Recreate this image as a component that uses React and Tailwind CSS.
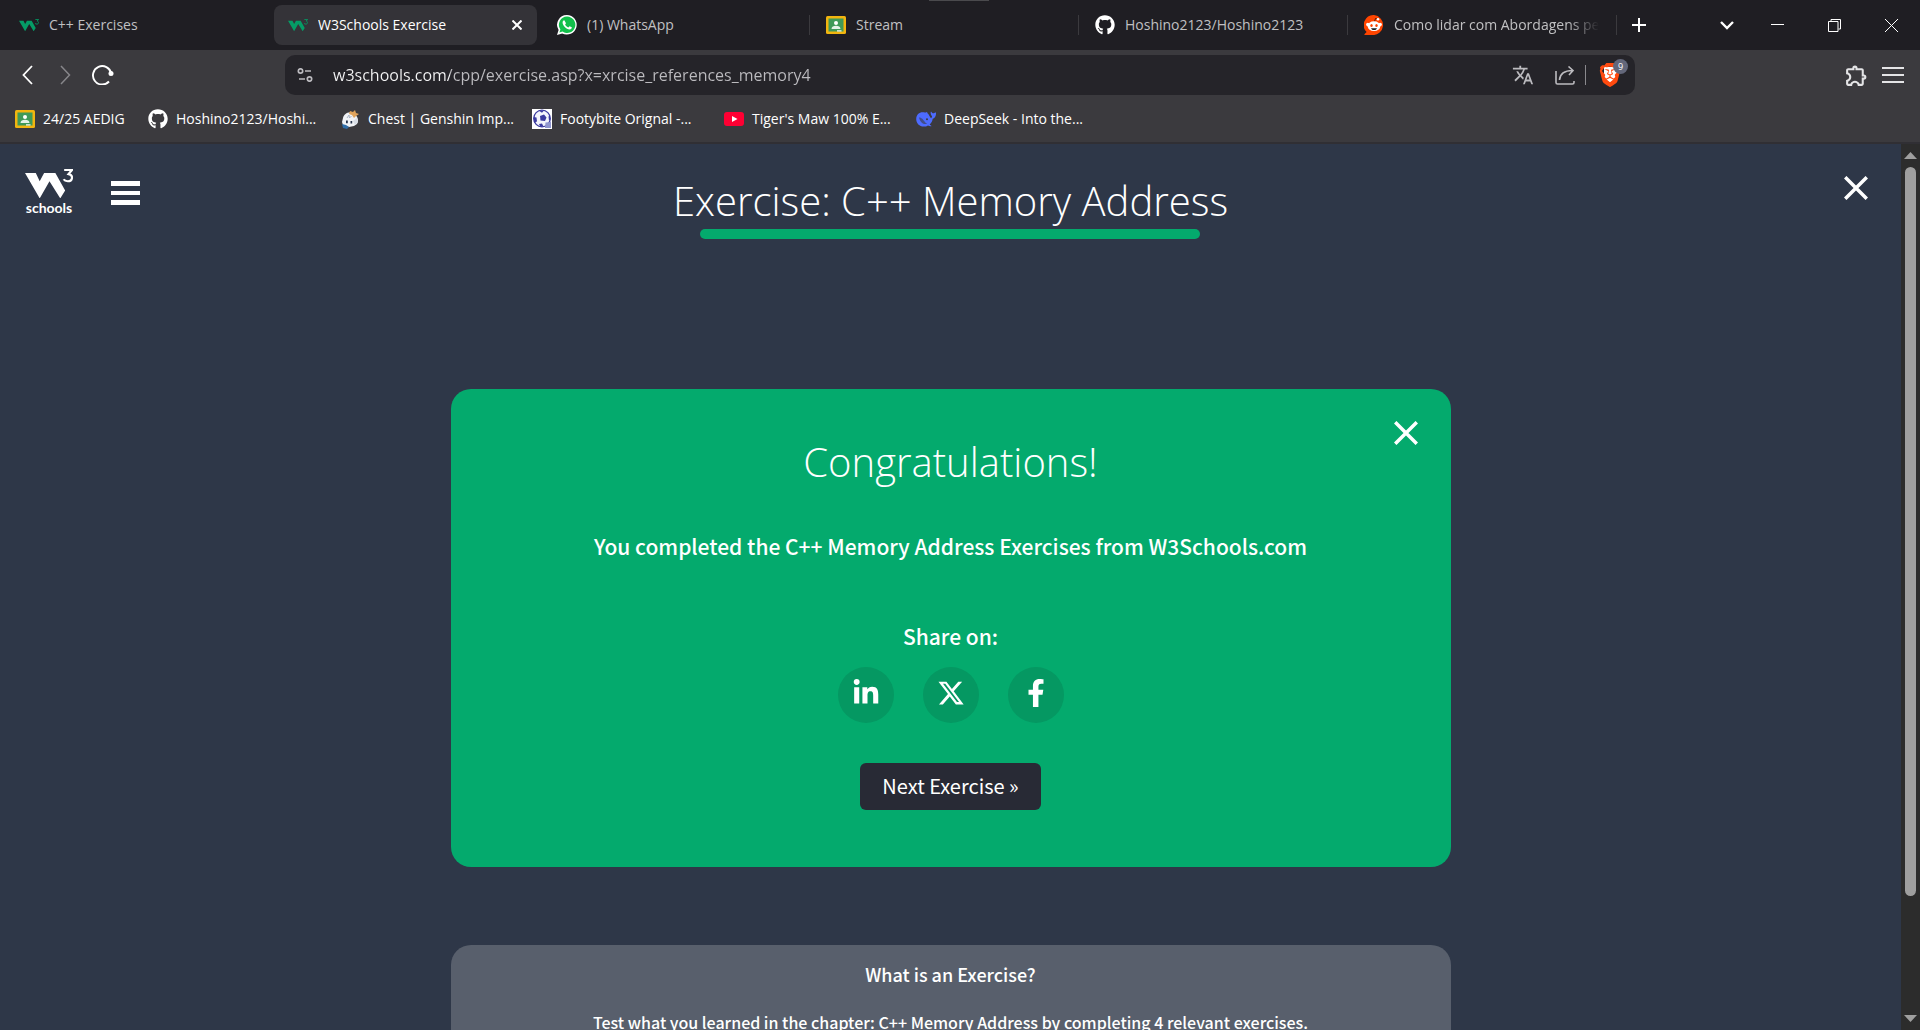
import { FaGithub, FaWhatsapp, FaLinkedinIn, FaFacebookF } from "react-icons/fa";
import { FaXTwitter } from "react-icons/fa6";
import { SiBrave } from "react-icons/si";
import { MdTranslate, MdOutlineExtension } from "react-icons/md";

const UI_FONT = "font-['Open_Sans','Noto_Sans',sans-serif]";
const BODY_FONT = "font-['Noto_Sans_CJK_SC',sans-serif]";

function W3Mark({ className }) {
  return (
    <svg viewBox="0 0 49 30" className={className} fill="currentColor" aria-hidden="true">
      <path d="M0 4h11l4 8.500 4.500-8.500h11.500l10 18-5 8-11-17.500L15 30z" />
      <path d="M40 1h8l-3.500 4.200c5 .8 4.500 7.300-.8 7.300-2 0-3.500-.7-4.300-2" fill="none" stroke="currentColor" strokeWidth="2.200" />
    </svg>
  );
}

function W3Favicon() {
  return <W3Mark className="w-5 text-[#059c66]" />;
}

function WhatsAppIcon() {
  return (
    <svg viewBox="0 0 20 20" className="size-5" aria-hidden="true">
      <path d="M10 0a9.800 9.800 0 1 1-4.800 18.400L0 20l1.600-5A9.800 9.800 0 0 1 10 0z" fill="#fff" />
      <path d="M10 1.600a8.200 8.200 0 1 1-4.400 15L2.400 17.600l1-3.100A8.200 8.200 0 0 1 10 1.600z" fill="#12c04b" />
      <path
        d="M7.300 5.300c-.5-.1-1.700.6-1.700 2.200 0 3 3.700 6.900 6.900 6.900 1.600 0 2.400-1 2.300-2.100l-2.300-1.100-1.100 1.300c-1.500-.6-2.700-1.700-3.300-3.100l.9-1.100z"
        fill="#fff"
      />
    </svg>
  );
}

function ClassroomIcon() {
  return (
    <svg viewBox="0 0 20 18" className="w-5" aria-hidden="true">
      <rect width="20" height="18" rx="1.5" fill="#f2b50f" />
      <rect x="2.500" y="2.500" width="15" height="13" fill="#3f9a58" />
      <circle cx="10" cy="7" r="2" fill="#fff" />
      <path d="M5.500 13c0-2.300 2-3.300 4.500-3.300s4.500 1 4.500 3.300z" fill="#e4f2e7" />
      <path d="M11 15.500h4.500v-1.200H11z" fill="#fff" />
    </svg>
  );
}

function GitHubIcon() {
  return <FaGithub className="size-5 text-white" />;
}

function RedditIcon() {
  return (
    <svg viewBox="0 0 20 20" className="size-5" aria-hidden="true">
      <path d="M10 0a10 10 0 1 1-2 20H1c-.6 0-.8-.6-.4-1l2-2A10 10 0 0 1 10 0z" fill="#ff4500" />
      <path d="M10.500 6.500l1-3 2.500.7" fill="none" stroke="#3a1408" strokeWidth=".9" />
      <circle cx="14" cy="4.300" r="1.300" fill="#fff" />
      <circle cx="3.800" cy="9.500" r="1.700" fill="#fff" />
      <circle cx="16.200" cy="9.500" r="1.700" fill="#fff" />
      <ellipse cx="10" cy="11.200" rx="6.300" ry="4.900" fill="#fff" />
      <ellipse cx="7.500" cy="10.500" rx="1.200" ry="1.500" fill="#ff4500" />
      <ellipse cx="12.500" cy="10.500" rx="1.200" ry="1.500" fill="#ff4500" />
      <path d="M7 13.200h6c-.5 1.300-1.600 1.900-3 1.900s-2.500-.6-3-1.900z" fill="#1c2023" />
    </svg>
  );
}

function PaimonIcon() {
  return (
    <svg viewBox="0 0 20 20" className="size-5" aria-hidden="true">
      <path d="M3 9c1-5 7-7 11-4 4 2 5 7 3 10l-3 2-5 1-6-2-1-3z" fill="#f1f3f6" />
      <path d="M2 15l4 1 3 2-2 2-4-1z" fill="#2f6da8" />
      <path d="M10 2l3 1 2-2 1 3 3 1-3 2-2 2-2-3-3-1z" fill="#e0a45c" />
      <path d="M7 9l2-3 .5 3 2-2" fill="none" stroke="#9aa6b8" strokeWidth=".8" />
      <path d="M6 11.500h1.800v2.800H6zM10.500 12h1.700v2.500h-1.700z" fill="#26334c" />
      <path d="M13 12l4-3 1 4-3 3z" fill="#d9dee6" />
    </svg>
  );
}

function FootballIcon() {
  return (
    <svg viewBox="0 0 20 20" className="size-5" aria-hidden="true">
      <rect width="20" height="20" fill="#fff" />
      <circle cx="10" cy="9.500" r="8.300" fill="#f3f4fc" stroke="#3b3aa0" strokeWidth="1.300" />
      <path d="M8 7l4-1.500 2.500 3-1.500 3.500-4.500-.5z" fill="#3b3aa0" />
      <path d="M7 1.800l5-.3-2 2.300zM1.800 8l2.700.5.5 4-2.700 1zM18 6.500l-1.500 1 .5 4 1.200-.5zM7 15l3-.5 1.500 3-3 .5z" fill="#3b3aa0" />
      <path d="M13.500 13.500l5.500-.5v6h-6z" fill="#8f95cf" />
    </svg>
  );
}

function YouTubeIcon() {
  return (
    <svg viewBox="0 0 20 14" className="w-5" aria-hidden="true">
      <rect width="20" height="14" rx="3" fill="#ff0033" />
      <path d="M8 4l5.500 3L8 10z" fill="#fff" />
    </svg>
  );
}

function DeepSeekIcon() {
  return (
    <svg viewBox="0 0 20 16" className="w-5" aria-hidden="true">
      <path
        d="M19.800 1.600c-.7-.2-1.200.6-2 .7-1 .1-1.800-.2-2.300-1.200-.3-.6-.7-.6-.8 0-.2 1.600.3 3.200 1.400 4.200-.2.9-.5 1.500-1 1.900-1-.9-1.600-2.300-2.300-3.500-.6-1-1.600-1.300-1.500-2 0-.5-.2-.7-.8-.5-.9.300-2.300.2-3.700.1C3.300 1.200.2 3.900.2 8c0 4.400 3.300 7.600 7.500 7.600 1.700 0 3.100-.4 4.300-1.200.9.500 2 .9 3 .8.600-.1.500-.5 0-.7-.7-.3-1.200-.6-1.300-1 1.600-1.300 2.700-3.300 3-5.700 2-.3 3.200-2.500 3.400-5.400.1-.5 0-.7-.3-.8z"
        fill="#4d6bfe"
      />
      <path d="M3 6.500c3 0 4.500 2.700 6.300 4.900.6.700 1.200 1.100 1.900 1.300-3 1.200-6.800-.4-8.200-6.200z" fill="#3b3a3e" opacity=".6" />
      <circle cx="11" cy="8.300" r="1" fill="#3b3a3e" />
    </svg>
  );
}

const TABS = [
  { title: "C++ Exercises", Icon: W3Favicon },
  { title: "W3Schools Exercise", Icon: W3Favicon, active: true },
  { title: "(1) WhatsApp", Icon: WhatsAppIcon, divider: true },
  { title: "Stream", Icon: ClassroomIcon, divider: true },
  { title: "Hoshino2123/Hoshino2123", Icon: GitHubIcon, divider: true },
  { title: "Como lidar com Abordagens pe", Icon: RedditIcon, divider: true, fade: true },
];

const BOOKMARKS = [
  { title: "24/25 AEDIG", Icon: ClassroomIcon, width: "w-[133px]" },
  { title: "Hoshino2123/Hoshi...", Icon: GitHubIcon, width: "w-[192px]" },
  { title: "Chest | Genshin Imp...", Icon: PaimonIcon, width: "w-[192px]" },
  { title: "Footybite Orignal -...", Icon: FootballIcon, width: "w-[192px]" },
  { title: "Tiger's Maw 100% E...", Icon: YouTubeIcon, width: "w-[192px]" },
  { title: "DeepSeek - Into the...", Icon: DeepSeekIcon, width: "w-[192px]" },
];

function Tab({ title, Icon, active, divider, fade }) {
  return (
    <div className="flex w-[269px] items-center">
      <div
        className={`flex h-10 min-w-0 grow items-center rounded-lg pr-3 pl-3.5 ${
          active ? "bg-[#343338] text-white" : "text-[#c0c0c2]"
        }`}
      >
        <button type="button" role="tab" aria-selected={!!active} className="flex min-w-0 grow items-center gap-2.5 text-left">
          <span className="shrink-0"><Icon /></span>
          <span
            className={`overflow-hidden text-sm whitespace-nowrap ${
              fade ? "mask-r-from-85% mask-r-to-100%" : ""
            }`}
          >
            {title}
          </span>
        </button>
        {active && (
          <button type="button" aria-label="Close tab" className="grid size-4 place-items-center">
            <svg viewBox="0 0 10 10" className="size-2.5" stroke="currentColor" strokeWidth="2"><path d="M.5.5l9 9M9.500.5l-9 9" /></svg>
          </button>
        )}
      </div>
      <span className={`ml-[3px] h-5 w-px ${divider ? "bg-[#3b3a3e]" : ""}`} />
      <span className="w-0.5" />
    </div>
  );
}

function TabStrip() {
  return (
    <div className="relative flex h-[50px] items-center bg-[#1f1e23] pl-[5px]">
      <span className="absolute top-0 left-[929px] h-px w-[60px] bg-[#4a4a4d]" />
      <div role="tablist" className="flex">
        {TABS.map((tab) => <Tab key={tab.title} {...tab} />)}
      </div>
      <button type="button" aria-label="New tab" className="ml-1 grid size-8 place-items-center text-white">
        <svg viewBox="0 0 14 14" className="size-3.5" stroke="currentColor" strokeWidth="2"><path d="M7 0v14M0 7h14" /></svg>
      </button>
      <div className="ml-auto flex items-center text-white">
        <button type="button" aria-label="Search tabs" className="grid h-10 w-11 place-items-center">
          <svg viewBox="0 0 14 9" className="w-3.5" fill="none" stroke="currentColor" strokeWidth="2.400"><path d="M1 1l6 6 6-6" /></svg>
        </button>
        <button type="button" aria-label="Minimize" className="grid h-10 w-[57px] place-items-center">
          <svg viewBox="0 0 13 13" className="size-[13px]" stroke="currentColor"><path d="M0 5.500h13" /></svg>
        </button>
        <button type="button" aria-label="Restore" className="grid h-10 w-[57px] place-items-center">
          <svg viewBox="0 0 13 13" className="size-[13px]" fill="none" stroke="currentColor"><path d="M.5 2.500h9.500v10H.5zM3 2.500V.5h9.500v9.500h-2" /></svg>
        </button>
        <button type="button" aria-label="Close window" className="grid h-10 w-[57px] place-items-center">
          <svg viewBox="0 0 13 13" className="size-[13px]" stroke="currentColor"><path d="M0 0l13 13M13 0L0 13" /></svg>
        </button>
      </div>
    </div>
  );
}

function Toolbar() {
  return (
    <div className="flex h-[50px] items-center pr-4 pl-[15px]">
      <div className="flex w-[270px] items-center gap-3.5">
        <button type="button" aria-label="Back" className="grid size-6 place-items-center text-white">
          <svg viewBox="0 0 11 20" className="h-5" fill="none" stroke="currentColor" strokeWidth="1.800"><path d="M10 1L1.500 10l8.500 9" /></svg>
        </button>
        <button type="button" aria-label="Forward" className="grid size-6 place-items-center text-[#87868a]">
          <svg viewBox="0 0 11 20" className="h-5" fill="none" stroke="currentColor" strokeWidth="1.500"><path d="M1 1l8.500 9L1 19" /></svg>
        </button>
        <button type="button" aria-label="Reload" className="grid size-6 place-items-center text-white">
          <svg viewBox="0 0 22 20" className="w-[22px]" fill="none" stroke="currentColor" strokeWidth="1.900">
            <path d="M17 16.500a9.200 9.200 0 1 1 2.200-8" />
            <circle cx="19" cy="8.500" r="2.500" fill="currentColor" stroke="none" />
          </svg>
        </button>
      </div>
      <div className="flex h-10 w-[1350px] items-center rounded-[10px] bg-[#252429] pr-[9px] pl-3 text-[#bcbbbf]">
        <svg viewBox="0 0 16 14" className="w-4" fill="none" stroke="currentColor" strokeWidth="1.700" aria-hidden="true">
          <circle cx="3.500" cy="3" r="2.200" /><path d="M8 3h6M2 11h6" /><circle cx="12.500" cy="11" r="2.200" />
        </svg>
        <input
          type="text"
          aria-label="Address"
          defaultValue="w3schools.com/cpp/exercise.asp?x=xrcise_references_memory4"
          className="ml-5 min-w-0 grow bg-linear-to-r from-[#f4f4f5] from-[117px] to-[#bcbbbf] to-[117px] bg-clip-text text-base text-transparent outline-none"
        />
        <button type="button" aria-label="Translate" className="grid w-6 place-items-center"><MdTranslate className="size-[22px]" /></button>
        <button type="button" aria-label="Share" className="ml-[18px] grid w-6 place-items-center">
          <svg viewBox="0 0 20 19" className="w-5" fill="none" stroke="currentColor" strokeWidth="1.600">
            <path d="M1 5v11.500a1.500 1.500 0 0 0 1.500 1.500h15a1.500 1.500 0 0 0 1.500-1.500V15M4.500 14C5 8 9.500 4.500 17.500 4.500M13.500.5l4.500 4-4 4.500" />
          </svg>
        </button>
        <span className="mx-2 h-5 w-px bg-[#8a898d]" />
        <button type="button" aria-label="Brave Shields" className="relative mx-1 grid h-6 w-6 place-items-center">
          <span className="col-start-1 row-start-1 h-[17px] w-[13px] rounded-b-lg bg-white" />
          <SiBrave className="col-start-1 row-start-1 size-6 text-[#ff4a0f]" />
          <span className="absolute -top-1 -right-1.5 grid size-[15px] place-items-center rounded-full bg-[#63677a] text-[9px] text-white">9</span>
        </button>
      </div>
      <div className="ml-auto flex items-center gap-3.5 text-[#e4e4e6]">
        <button type="button" aria-label="Extensions" className="grid size-6 place-items-center"><MdOutlineExtension className="size-[25px]" /></button>
        <button type="button" aria-label="Menu" className="grid w-[22px] place-items-center">
          <svg viewBox="0 0 22 18" className="w-[22px]" stroke="currentColor" strokeWidth="2"><path d="M0 2h22M0 9h22M0 16h22" /></svg>
        </button>
      </div>
    </div>
  );
}

function BookmarkBar() {
  return (
    <nav aria-label="Bookmarks" className="flex h-[42px] items-center pb-1 pl-[15px] text-white">
      {BOOKMARKS.map(({ title, Icon, width }) => (
        <a key={title} href="#" className={`flex items-center gap-2 text-sm whitespace-nowrap ${width}`}>
          <span className="shrink-0"><Icon /></span>
          {title}
        </a>
      ))}
    </nav>
  );
}

function CloseButton({ label, className }) {
  return (
    <button type="button" aria-label={label} className={className}>
      <svg viewBox="0 0 24 24" className="size-6" stroke="#fff" strokeWidth="3.500"><path d="M1.200 1.200l21.600 21.600M22.800 1.200L1.200 22.800" /></svg>
    </button>
  );
}

function PageHeader() {
  return (
    <header className="grid grid-cols-[1fr_auto_1fr] items-start">
      <div className="flex items-start pl-[25px]">
        <a href="#" aria-label="W3Schools home" className="mt-[25px] flex w-12 flex-col items-center gap-0.5">
          <W3Mark className="w-12" />
          <span className="font-['Lato',sans-serif] text-sm leading-4 font-bold">schools</span>
        </a>
        <button type="button" aria-label="Open navigation" className="mt-[37px] ml-[38px]">
          <svg viewBox="0 0 29 24" className="w-[29px]" fill="#fff"><path d="M0 0h29v5H0zM0 10h29v4H0zM0 19h29v5H0z" /></svg>
        </button>
      </div>
      <div className="flex flex-col items-center pt-7">
        <h1 className={`text-[40px] leading-[57px] font-light whitespace-nowrap ${UI_FONT}`}>Exercise: C++ Memory Address</h1>
        <div className="h-2.5 w-[500px] rounded-full bg-[#04aa6d]" />
      </div>
      <CloseButton label="Close exercise" className="mt-8 mr-[33px] justify-self-end" />
    </header>
  );
}

const SHARE = [
  { label: "Share on LinkedIn", Icon: FaLinkedinIn },
  { label: "Share on X", Icon: FaXTwitter },
  { label: "Share on Facebook", Icon: FaFacebookF },
];

function CongratulationsCard() {
  return (
    <section className="relative mt-[150px] flex w-full max-w-[1000px] flex-col items-center rounded-[20px] bg-[#04aa6d] pt-[43px] pb-[57px]">
      <CloseButton label="Close message" className="absolute top-8 right-[33px]" />
      <h2 className={`text-[40px] leading-[60px] font-light ${UI_FONT}`}>Congratulations!</h2>
      <p className="mt-10 text-[21px] leading-7 font-medium">You completed the C++ Memory Address Exercises from W3Schools.com</p>
      <p className="mt-[62px] text-[21px] leading-7 font-medium">Share on:</p>
      <div className="mt-[17px] flex gap-[29px]">
        {SHARE.map(({ label, Icon }) => (
          <a key={label} href="#" aria-label={label} className="grid size-14 place-items-center rounded-full bg-[#059862] pb-1">
            <Icon className="size-7" />
          </a>
        ))}
      </div>
      <button type="button" className="mt-10 h-[47px] rounded-md bg-[#282a35] px-[22px] pb-0.5 text-xl leading-7">Next Exercise »</button>
    </section>
  );
}

function InfoCard() {
  return (
    <section className="mt-[78px] flex w-full max-w-[1000px] grow flex-col items-center rounded-t-[20px] bg-[#585f6c] pt-[15px] leading-7 font-medium">
      <h3 className="text-lg leading-7">What is an Exercise?</h3>
      <p className="mt-5 text-base leading-7">Test what you learned in the chapter: C++ Memory Address by completing 4 relevant exercises.</p>
    </section>
  );
}

function Scrollbar() {
  return (
    <div aria-hidden="true" className="flex w-[19px] flex-col items-center bg-[#2c2c2c] py-2">
      <svg viewBox="0 0 13 7" className="w-[13px] shrink-0" fill="#9f9f9f"><path d="M6.500 0L13 7H0z" /></svg>
      <div className="mt-2 flex w-[11px] grow flex-col">
        <div className="h-[86%] rounded-full bg-[#9f9f9f]" />
      </div>
      <svg viewBox="0 0 13 7" className="w-[13px] shrink-0" fill="#9f9f9f"><path d="M0 0h13L6.500 7z" /></svg>
    </div>
  );
}

export default function App() {
  return (
    <div className={`flex h-screen flex-col overflow-hidden ${UI_FONT}`}>
      <div className="shrink-0 border-b-2 border-[#302f34] bg-[#3b3a3e]">
        <TabStrip />
        <Toolbar />
        <BookmarkBar />
      </div>
      <div className="flex min-h-0 grow">
        <main className={`flex min-w-0 grow flex-col overflow-hidden bg-[#2e3748] text-white ${BODY_FONT}`}>
          <PageHeader />
          <div className="flex grow flex-col items-center">
            <CongratulationsCard />
            <InfoCard />
          </div>
        </main>
        <Scrollbar />
      </div>
    </div>
  );
}
